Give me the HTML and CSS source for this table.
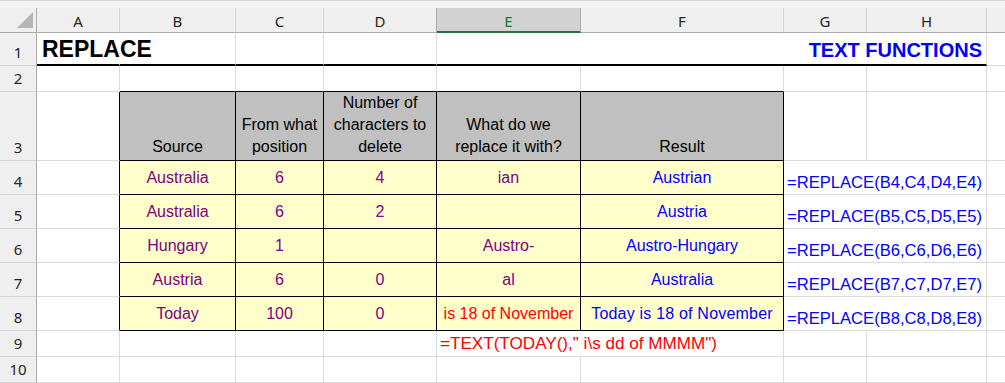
FILE: index.html
```html
<!DOCTYPE html>
<html lang="en">
<head>
<meta charset="utf-8">
<title>REPLACE – Text functions</title>
<link rel="stylesheet" href="styles.css">
</head>
<body>
<div class="strip"></div>
<div class="sheet">
  <!-- column headers -->
  <div class="corner"><svg width="16" height="16" viewBox="0 0 16 16"><polygon points="16,0 16,16 0,16" fill="#b5b5b5"/></svg></div>
  <div class="ch">A</div>
  <div class="ch">B</div>
  <div class="ch">C</div>
  <div class="ch pre-sel">D</div>
  <div class="ch sel">E</div>
  <div class="ch">F</div>
  <div class="ch">G</div>
  <div class="ch">H</div>
  <div class="ch last"></div>

  <!-- row 1 -->
  <div class="rh">1</div>
  <div class="c thick nr title">REPLACE</div>
  <div class="c thick"></div>
  <div class="c thick"></div>
  <div class="c thick"></div>
  <div class="c thick merged heading">TEXT FUNCTIONS</div>
  <div class="c last"></div>

  <!-- row 2 -->
  <div class="rh">2</div>
  <div class="c"></div>
  <div class="c bt"></div>
  <div class="c bt"></div>
  <div class="c bt"></div>
  <div class="c bt"></div>
  <div class="c bt"></div>
  <div class="c"></div>
  <div class="c"></div>
  <div class="c last"></div>

  <!-- row 3 -->
  <div class="rh">3</div>
  <div class="c bl"></div>
  <div class="th">Source</div>
  <div class="th">From what<br>position</div>
  <div class="th">Number of<br>characters to<br>delete</div>
  <div class="th">What do we<br>replace it with?</div>
  <div class="th">Result</div>
  <div class="c"></div>
  <div class="c"></div>
  <div class="c last"></div>

  <!-- row 4 -->
  <div class="rh">4</div>
  <div class="c bl"></div>
  <div class="td">Australia</div>
  <div class="td">6</div>
  <div class="td">4</div>
  <div class="td">ian</div>
  <div class="td blue">Austrian</div>
  <div class="c nr f blue">=REPLACE(B4,C4,D4,E4)</div>
  <div class="c"></div>
  <div class="c last"></div>

  <!-- row 5 -->
  <div class="rh">5</div>
  <div class="c bl"></div>
  <div class="td">Australia</div>
  <div class="td">6</div>
  <div class="td">2</div>
  <div class="td"></div>
  <div class="td blue">Austria</div>
  <div class="c nr f blue">=REPLACE(B5,C5,D5,E5)</div>
  <div class="c"></div>
  <div class="c last"></div>

  <!-- row 6 -->
  <div class="rh">6</div>
  <div class="c bl"></div>
  <div class="td">Hungary</div>
  <div class="td">1</div>
  <div class="td"></div>
  <div class="td">Austro-</div>
  <div class="td blue">Austro-Hungary</div>
  <div class="c nr f blue">=REPLACE(B6,C6,D6,E6)</div>
  <div class="c"></div>
  <div class="c last"></div>

  <!-- row 7 -->
  <div class="rh">7</div>
  <div class="c bl"></div>
  <div class="td">Austria</div>
  <div class="td">6</div>
  <div class="td">0</div>
  <div class="td">al</div>
  <div class="td blue">Australia</div>
  <div class="c nr f blue">=REPLACE(B7,C7,D7,E7)</div>
  <div class="c"></div>
  <div class="c last"></div>

  <!-- row 8 -->
  <div class="rh">8</div>
  <div class="c bl"></div>
  <div class="td">Today</div>
  <div class="td">100</div>
  <div class="td">0</div>
  <div class="td red">is 18 of November</div>
  <div class="td blue wide">Today is 18 of November</div>
  <div class="c nr f blue">=REPLACE(B8,C8,D8,E8)</div>
  <div class="c"></div>
  <div class="c last"></div>

  <!-- row 9 -->
  <div class="rh">9</div>
  <div class="c"></div>
  <div class="c"></div>
  <div class="c"></div>
  <div class="c"></div>
  <div class="c nr f f-text red">=TEXT(TODAY(),"&nbsp;i\s dd of MMMM")</div>
  <div class="c"></div>
  <div class="c"></div>
  <div class="c"></div>
  <div class="c last"></div>

  <!-- row 10 -->
  <div class="rh">10</div>
  <div class="c"></div>
  <div class="c"></div>
  <div class="c"></div>
  <div class="c"></div>
  <div class="c"></div>
  <div class="c"></div>
  <div class="c"></div>
  <div class="c"></div>
  <div class="c last"></div>
</div>
</body>
</html>
```

FILE: styles.css
```css
html, body {
  margin: 0;
  padding: 0;
  background: #ffffff;
}

body {
  width: 1005px;
  height: 383px;
  overflow: hidden;
  font-family: "Liberation Sans", Arial, sans-serif;
  color: #000000;
}

.strip {
  box-sizing: border-box;
  height: 8px;
  background: #f3f3f3;
  border-top: 1px solid #d6d6d6;
}

.sheet {
  display: grid;
  grid-template-columns: 37px 83px 116px 88px 113px 144px 203px 83px 120px 1fr;
  grid-template-rows: 25px 33px 26px 69px repeat(5, 34px) 26px 26px;
}

.sheet > div {
  box-sizing: border-box;
  min-width: 0;
  display: flex;
  white-space: nowrap;
}

/* headers */
.corner {
  background: #efefef;
  border-right: 1px solid #ababab;
  border-bottom: 1px solid #ababab;
  justify-content: flex-end;
  align-items: flex-end;
  padding: 0 3px 4px 0;
}

.ch {
  background: #efefef;
  border-right: 1px solid #d2d2d2;
  border-bottom: 1px solid #ababab;
  justify-content: center;
  align-items: center;
  font-family: "Noto Sans", "Open Sans", sans-serif;
  font-size: 15px;
  color: #262626;
  padding-top: 1px;
}

.ch.pre-sel {
  border-right-color: #ababab;
}

.ch.sel {
  background: #d2d2d2;
  color: #217346;
  border-right-color: #ababab;
  border-bottom: 2px solid #217346;
  padding-top: 2px;
}

.ch.last,
.c.last {
  border-right: none;
}

.rh {
  background: #efefef;
  border-right: 1px solid #ababab;
  border-bottom: 1px solid #d4d4d4;
  justify-content: center;
  align-items: flex-end;
  font-family: "Noto Sans", "Open Sans", sans-serif;
  font-size: 15px;
  line-height: 20px;
  color: #262626;
  padding-bottom: 3px;
}

/* ordinary cells */
.c {
  border-right: 1px solid #dadada;
  border-bottom: 1px solid #dadada;
  align-items: flex-end;
  padding: 0 3px;
  font-size: 16px;
  line-height: 22px;
}

.c.nr {
  border-right-color: transparent;
}

.c.thick {
  border-bottom: 2px solid #000000;
}

.c.bt {
  border-bottom-color: #000000;
}

.c.bl {
  border-right-color: #000000;
}

.merged {
  grid-column: span 4;
  justify-content: flex-end;
}

.title {
  font-size: 23px;
  font-weight: bold;
  line-height: 26px;
  padding: 0 0 2px 5px;
}

.heading {
  font-size: 20px;
  font-weight: bold;
  line-height: 24px;
  color: #0000ff;
  padding: 0 4px 2px 0;
}

.f {
  font-size: 16.6px;
  line-height: 22px;
  padding-bottom: 0;
}

.f-text {
  font-size: 17.1px;
  padding-bottom: 1px;
}

/* table */
.th {
  background: #c0c0c0;
  border-right: 1px solid #000000;
  border-bottom: 1px solid #000000;
  justify-content: center;
  align-items: flex-end;
  text-align: center;
  font-size: 16px;
  line-height: 22px;
  padding-bottom: 2px;
}

.td {
  background: #ffffcc;
  border-right: 1px solid #000000;
  border-bottom: 1px solid #000000;
  justify-content: center;
  align-items: center;
  font-size: 16px;
  line-height: 22px;
  color: #800080;
}

.td.wide {
  letter-spacing: 0.2px;
}

.blue {
  color: #0000ff;
}

.red {
  color: #ff0000;
}
```
